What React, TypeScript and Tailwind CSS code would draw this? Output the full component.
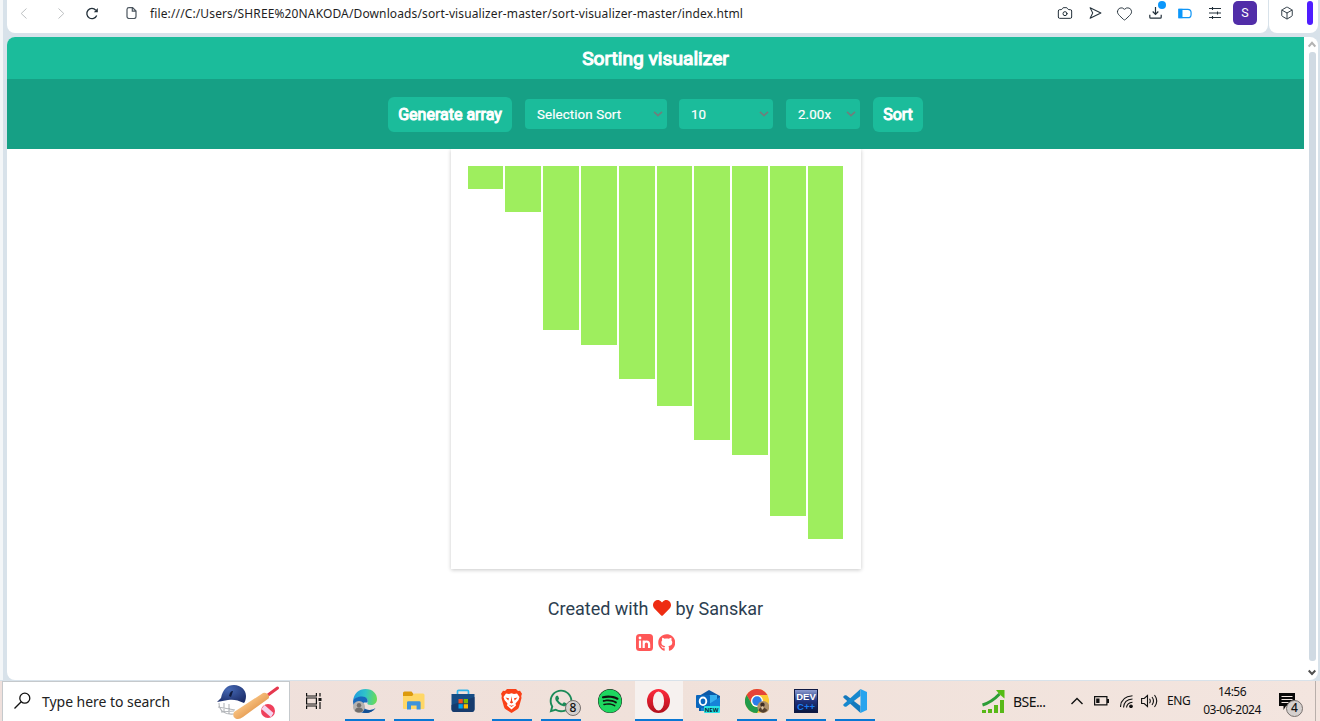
import type { ReactNode } from "react";
import { FaGithub, FaHeart, FaSpotify, FaWhatsapp } from "react-icons/fa";
import { Box, Camera, Heart } from "lucide-react";

const bars = [23, 46, 164, 179, 213, 240, 274, 289, 350, 373];

function Select({ label, className }: { label: string; className: string }) {
  return (
    <div className={`flex h-[30px] items-center justify-between rounded-[4px] bg-[#1bbc9b] pr-[4px] pl-[12px] text-[13.33px] text-white ${className}`}>
      <span className="pt-[2px] tracking-[0.1px] whitespace-nowrap [-webkit-text-stroke:0.2px_white]">{label}</span>
      <svg width="10" height="6" viewBox="0 0 10 6" fill="none" stroke="#6f7f7c" strokeWidth="1.7">
        <path d="M1 .8 5 4.6 9 .8" />
      </svg>
    </div>
  );
}

function ActionButton({ label, className }: { label: string; className: string }) {
  return (
    <button className={`h-[35px] rounded-[6px] bg-[#1bbc9b] pt-[2px] text-[16px] whitespace-nowrap text-white [-webkit-text-stroke:1px_white] ${className}`}>
      {label}
    </button>
  );
}

function BrowserBar() {
  return (
    <div className="flex h-[33px] shrink-0 gap-[1px] pl-[7px] text-[#23303a]">
      <div className="flex h-[33px] w-[1261px] items-start rounded-b-[8px] bg-white">
        <svg className="mt-[8px] ml-[13px]" width="8" height="11" viewBox="0 0 8 11" fill="none" stroke="#bcbfc1" strokeWidth="1">
          <path d="M6.5.5 1.2 5.5l5.3 5" />
        </svg>
        <svg className="mt-[8px] ml-[29px]" width="8" height="11" viewBox="0 0 8 11" fill="none" stroke="#bcbfc1" strokeWidth="1">
          <path d="M1.5.5 6.8 5.5l-5.3 5" />
        </svg>
        <svg className="mt-[7px] ml-[20px]" width="14" height="13" viewBox="0 0 14 13" fill="none" stroke="currentColor" strokeWidth="1.3">
          <path d="M11.7 8.4A5.1 5.1 0 1 1 10.8 3.2" />
          <path d="M12.8 1v4.2H8.8Z" fill="currentColor" stroke="none" />
        </svg>
        <svg className="mt-[7px] ml-[27px]" width="11" height="12" viewBox="0 0 11 12" fill="none" stroke="#4b555e" strokeWidth="1.2">
          <path d="M3 .6h3.6L10 4v5.5a2 2 0 0 1-2 2H3a2 2 0 0 1-2-2v-7A2 2 0 0 1 3 .6ZM6.3.8v3.4h3.5" />
        </svg>
        <span className="mt-[5px] ml-[13px] w-[907px] font-['Noto_Sans',sans-serif] text-[12px] leading-[18px] tracking-[0.128px] whitespace-nowrap text-[#1f1f1f]">
          file:///C:/Users/SHREE%20NAKODA/Downloads/sort-visualizer-master/sort-visualizer-master/index.html
        </span>
        <div className="mt-[1px] flex h-[24px] items-center">
          <Camera size={16} strokeWidth={1.5} />
          <svg className="ml-[16px]" width="13" height="14" viewBox="0 0 14 14" fill="none" stroke="currentColor" strokeWidth="1.1" strokeLinejoin="round">
            <path d="M1.2 1.3 12.8 7 1.2 12.7 4 7Z" />
          </svg>
          <Heart className="ml-[14px]" size={17} strokeWidth={1.3} />
          <div className="relative ml-[16px] h-[14px] w-[13px]">
            <svg width="13" height="13" viewBox="0 0 13 13" fill="none" stroke="currentColor" strokeWidth="1.2">
              <path d="M6.5 1v7.2M3.7 5.5l2.8 2.8 2.8-2.8M.8 8.8v2.4q0 1 1 1h9.4q1 0 1-1V8.8" />
            </svg>
            <i className="absolute -top-[5px] left-[9px] h-[8px] w-[8px] rounded-full bg-[#0b97fb]" />
          </div>
          <svg className="ml-[16px]" width="14" height="11" viewBox="0 0 15 11" fill="none">
            <path d="M1 1h9.5a3.5 3.5 0 0 1 3.5 3.5v2a3.5 3.5 0 0 1-3.5 3.5H1Z" stroke="#1095f5" strokeWidth="1.3" />
            <path d="M.5.5h4.3v10H.5Z" fill="#0b97fb" />
          </svg>
          <svg className="ml-[17px]" width="12" height="12" viewBox="0 0 12 12" fill="none" stroke="currentColor" strokeWidth="1.1">
            <path d="M0 1.5h12M0 6h12M0 10.5h12M3.500 0v3M8.500 4.500v3M3.500 9v3" />
          </svg>
          <div className="ml-[12px] flex h-[24px] w-[24px] items-center justify-center rounded-[5px] bg-[#512da8] text-[12.5px] text-white">S</div>
        </div>
      </div>
      <div className="flex h-[33px] w-[49px] rounded-b-[8px] bg-white">
        <Box className="mt-[6px] ml-[11px]" size={14} strokeWidth={1.6} />
        <i className="mt-[1px] ml-[13px] h-[24px] w-[6px] rounded-[3px] bg-[#4f1dff]" />
      </div>
    </div>
  );
}

function Page() {
  return (
    <main className="flex h-[643px] w-[1311px] overflow-hidden rounded-[8px] bg-white">
      <div className="flex w-[1297px] flex-col">
        <h1 className="flex h-[42px] items-center justify-center bg-[#1bbc9b] pt-[2px] text-[19.2px] text-white [-webkit-text-stroke:1.1px_white]">Sorting visualizer</h1>
        <nav className="z-10 flex h-[70px] items-center justify-center bg-[#16a085]">
          <ActionButton label="Generate array" className="w-[124px]" />
          <Select label="Selection Sort" className="ml-[13px] w-[142px]" />
          <Select label="10" className="ml-[12px] w-[94px]" />
          <Select label="2.00x" className="ml-[13px] w-[74px]" />
          <ActionButton label="Sort" className="ml-[13px] w-[50px]" />
        </nav>
        <section className="ml-[444px] flex h-[420px] w-[410px] items-start gap-[2.04px] pt-[17px] pl-[16.65px] shadow-[0_1px_4px_rgba(0,0,0,0.22)]">
          {bars.map((h) => (
            <div key={h} className="w-[35.75px] shrink-0 bg-[#9eee5e]" style={{ height: h }} />
          ))}
        </section>
        <footer className="flex flex-col items-center pt-[27px] text-[#2c3e50]">
          <p className="flex h-[24px] items-center text-[18px] whitespace-pre">
            Created with <FaHeart className="text-[#ee2c12]" size={18} /> by Sanskar
          </p>
          <div className="mt-[14px] flex items-center gap-[5px] text-[#ff5757]">
            <svg width="17" height="17" viewBox="0 0 17 17">
              <path fillRule="evenodd" d="M3.500 0h10Q17 0 17 3.500v10q0 3.500-3.500 3.500h-10Q0 17 0 13.500v-10Q0 0 3.500 0Z" fill="currentColor" />
              <circle cx="4" cy="4" r="1.400" fill="white" />
              <path d="M4 6.500v7.500M7.700 6.500v7.500M7.700 10.300q0-2.800 2.700-2.800t2.700 2.800v3.700" fill="none" stroke="white" strokeWidth="2.200" />
            </svg>
            <FaGithub size={17.5} />
          </div>
        </footer>
      </div>
      <div className="flex flex-col items-center pt-[4px] pl-[4px]">
        <svg width="8" height="7" viewBox="0 0 8 7" fill="none" stroke="#b3b3b3" strokeWidth="2">
          <path d="M.7 5.5 4 1.8 7.3 5.5" />
        </svg>
        <i className="mt-[4px] h-[609px] w-[7px] rounded-[3px] bg-[#d0dae3]" />
        <svg className="mt-[8px]" width="8" height="7" viewBox="0 0 8 7" fill="none" stroke="#505050" strokeWidth="2">
          <path d="M.7 1.5 4 5 7.3 1.5" />
        </svg>
      </div>
    </main>
  );
}

function TaskItem({ children, open = false, active = false }: { children: ReactNode; open?: boolean; active?: boolean }) {
  return (
    <div className={`flex h-[40px] w-[48px] flex-col items-center ${active ? "bg-[#f6f1ef]" : ""}`}>
      <div className="flex h-[38px] items-center pt-[2px]">{children}</div>
      {open && <i className={`h-[2px] bg-[#0a78d4] ${active ? "w-[48px]" : "w-[40px]"}`} />}
    </div>
  );
}

function CricketArt() {
  return (
    <svg className="mt-[2px]" width="64" height="36" viewBox="0 0 64 36">
      <defs>
        <linearGradient id="bat" x1="0" y1="0" x2="1" y2="1">
          <stop offset="0.3" stopColor="#fbc98a" />
          <stop offset="0.8" stopColor="#dd8a3c" />
        </linearGradient>
        <radialGradient id="helmet" cx="0.4" cy="0.25" r="0.8">
          <stop offset="0" stopColor="#4568b4" />
          <stop offset="1" stopColor="#1b2c68" />
        </radialGradient>
      </defs>
      <path d="M2 19c0 8 6 12 15 11M1 23l17 3M4 28l13-1M7 19v9M12 20v10" fill="none" stroke="#b4b7bb" strokeWidth="1.1" />
      <path d="M4 14C6 5 10 1 17 1c7 0 12 5 12 11 0 3-1 6-2 7-6-3-11-4-16-3L0 18Z" fill="url(#helmet)" />
      <path d="M12 12c1-4 2-5 4-5l-2 6Z" fill="#101b3d" />
      <path d="m51 11 9.500-7" stroke="#e5384e" strokeWidth="3" strokeLinecap="round" />
      <path d="M17 28 46 9q2-1 4.500 1t1 4.500L26 33q-4 3-7.500 1.500T17 28Z" fill="url(#bat)" />
      <circle cx="51" cy="27" r="7" fill="#ef3f5c" />
      <path d="m44.500 25 3-4 9 8-2.500 4.300Z" fill="#f4d5ee" />
    </svg>
  );
}

function Edge() {
  return (
    <div className="relative h-[24px] w-[24px]">
      <svg width="24" height="24" viewBox="0 0 24 24">
        <defs>
          <linearGradient id="edgeTop" x1="0" y1="0.4" x2="1" y2="0.5">
            <stop offset="0" stopColor="#1f9be0" />
            <stop offset="0.5" stopColor="#30c3c8" />
            <stop offset="1" stopColor="#6bdc55" />
          </linearGradient>
        </defs>
        <path d="M0 12C1 4 6 0 12.500 0 20 0 24 5 24 10c0 4-3 6-6 6-3 0-4-1-3.500-2 1.500-3-1-6-5-6C5 8 1 10 0 12Z" fill="url(#edgeTop)" />
        <path d="M0 12c1-3 5-4.500 9-4.500 4.500 0 6.500 3 5.500 6H11c-3 3 1 8 6 7.500 3 0 4-1 5.500-2C20 22.500 16 24 12 24 5 24 0 19 0 12Z" fill="#1769bd" />
        <path d="M10 12c-3 4 0 10 7 9 3 0 4-1 5.500-2C20 22.500 17 24 13 24 6 24 5 16 10 12Z" fill="#124f94" />
      </svg>
      <svg className="absolute top-[12px] left-0" width="12" height="12" viewBox="0 0 12 12">
        <circle cx="6" cy="6" r="6" fill="#b5b1af" />
        <circle cx="6" cy="4.2" r="2.2" fill="#706d6c" />
        <path d="M2 10q0-3.500 4-3.500t4 3.500q-4 3-8 0Z" fill="#706d6c" />
      </svg>
    </div>
  );
}

function Folder() {
  return (
    <svg width="22" height="20" viewBox="0 0 22 20">
      <path d="M0 2q0-1.500 1.500-1.500h7L10.500 3v4H0Z" fill="#dc9a0d" />
      <path d="M0 5h9l2.500-2.500H20q1.500 0 1.500 1.500v13q0 1-1 1H1q-1 0-1-1Z" fill="#ffd766" />
      <path d="M4 18.500v-7q0-1.300 1.300-1.300h11q1.300 0 1.300 1.300v7h-4v-4H8v4Z" fill="#3c93dc" />
    </svg>
  );
}

function Store() {
  return (
    <svg className="mr-[1px]" width="24" height="24" viewBox="0 0 24 24">
      <path d="M6.500 6V2.500Q6.500 1.300 7.700 1.300h8.600q1.200 0 1.200 1.200V6" fill="none" stroke="#32b5ec" strokeWidth="1.7" />
      <path d="M.5 5h23v15q0 3-3 3h-17q-3 0-3-3Z" fill="#164d85" />
      <path d="M.5 16 23.500 8v12q0 3-3 3h-17q-3 0-3-3Z" fill="#173b6d" />
      <path d="M7.500 10h4.300v4.300H7.500Z" fill="#f25022" />
      <path d="M12.700 10H17v4.300h-4.300Z" fill="#7fba00" />
      <path d="M7.500 15.200h4.300v4.300H7.500Z" fill="#00a4ef" />
      <path d="M12.700 15.200H17v4.300h-4.300Z" fill="#ffb900" />
    </svg>
  );
}

function Brave() {
  return (
    <svg className="mr-[1px]" width="21" height="24" viewBox="0 0 21 24">
      <path d="M6 0h9l2 2 2-.3 2 3-.8 2.300.3 2-2.500 9q-.5 1.500-2 2.500L10.500 24 5 20.500Q3.500 19.500 3 18L.5 9l.3-2L0 4.700l2-3L4 2Z" fill="#fa4118" />
      <path d="m5 4.500 3 .5 2.500-.7 2.500.7 3-.5L18.500 8l-1 3-3 3.500.5 2-4.500 4-4.500-4 .5-2-3-3.500-1-3Z" fill="white" />
      <path d="m4.500 8.500 3.500.7-.7 2.300Zm12 0-3.500.7.700 2.300ZM10.500 7l-.7 5-1 1.500 1.700 1 1.700-1-1-1.500ZM7.500 15.800l3 1 3-1-3 2.200Z" fill="#fa4118" />
    </svg>
  );
}

function Opera() {
  return (
    <svg className="mr-[1px]" width="23" height="24" viewBox="0 0 23 24">
      <defs>
        <linearGradient id="opera" x1="0" y1="0" x2="0" y2="1">
          <stop offset="0" stopColor="#ff2a3c" />
          <stop offset="1" stopColor="#b1101c" />
        </linearGradient>
      </defs>
      <path fillRule="evenodd" d="M11.500 0a11.500 12 0 1 1 0 24 11.500 12 0 1 1 0-24Zm0 2.600a5.600 9.400 0 1 0 0 18.800 5.600 9.400 0 1 0 0-18.800Z" fill="url(#opera)" />
    </svg>
  );
}

function Outlook() {
  return (
    <div className="relative mr-[1px] h-[24px] w-[24px]">
      <svg width="24" height="24" viewBox="0 0 24 24">
        <path d="m3 7 10-6 11 6v15H3Z" fill="#0c59a6" />
        <path d="M8 6h13v9H8Z" fill="#36b0ee" />
        <path d="m5 10 8 5 11-7v14H5Z" fill="#1683d8" />
        <rect y="6" width="14" height="13" rx="1" fill="#0a67bd" />
        <ellipse cx="7" cy="12.3" rx="3.3" ry="3.8" fill="none" stroke="white" strokeWidth="1.9" />
      </svg>
      <span className="absolute top-[17px] left-[8px] flex h-[7px] w-[16px] items-center justify-center rounded-[1px] bg-[#28e2e6] font-['Noto_Sans'] text-[6px] leading-none font-bold text-[#082a35]">NEW</span>
    </div>
  );
}

function Chrome() {
  return (
    <svg width="24" height="24" viewBox="0 0 24 24">
      <circle cx="12" cy="12" r="12" fill="#fcc934" />
      <path d="M1.600 6A12 12 0 0 1 22.400 6H12a6 6 0 0 0-5.200 9Z" fill="#e5433a" />
      <path d="M1.600 6A12 12 0 0 0 12 24l5.200-9a6 6 0 0 1-10.400 0Z" fill="#229b4b" />
      <circle cx="12" cy="12" r="6" fill="white" />
      <circle cx="12" cy="12" r="4.7" fill="#2b7de9" />
      <circle cx="18.300" cy="18" r="6" fill="#ae9069" />
      <circle cx="17.500" cy="15.800" r="2.2" fill="#3c2c24" />
      <path d="M13.500 21.500q1-4 5-3.500l4 3q-4 5-9 .5Z" fill="#55412f" />
      <path d="m16 18 2-1 1 2-2 2Z" fill="#dfc6a2" />
    </svg>
  );
}

function DevCpp() {
  return (
    <div className="flex h-[24px] w-[24px] flex-col items-center justify-between overflow-hidden border border-[#101a44] bg-linear-to-b from-[#8d9bd0] via-[#20327c] to-[#0b1740] font-['Liberation_Sans'] font-bold">
      <span className="mt-[2px] h-[9px] text-[9.5px] leading-[9px] text-white">DEV</span>
      <span className="mb-px h-[9px] text-[9.5px] leading-[9px] text-[#1b7cf0]">C++</span>
    </div>
  );
}

function VsCode() {
  return (
    <svg width="24" height="24" viewBox="0 0 24 24">
      <path d="M1.800 6.200.3 7.600v1L17.500 24V17L3.200 6.200Z" fill="#1479bd" />
      <path d="m.3 16.400 1.500 1.400h1.400L17.500 7V0L.3 15.400Z" fill="#1688ce" />
      <path d="M17.500 0 24 3v18l-6.500 3Z" fill="#28a4ee" />
    </svg>
  );
}

function Tray() {
  return (
    <div className="ml-auto flex h-[40px] w-[338px] items-center font-['Noto_Sans',sans-serif] text-[#111]">
      <svg width="23" height="23" viewBox="0 0 23 23">
        <path d="M0 20h4v3H0Zm6-1h4v4H6Zm6-4h4v8h-4Zm6-5h4v13h-4Z" fill="#58b818" />
        <path d="M.5 15Q10 12 17.500 4" stroke="#2c9d37" strokeWidth="3" fill="none" />
        <path d="M14 0h8.500v8.500L19.500 6 16 2.500Z" fill="#55bc12" />
      </svg>
      <span className="ml-[8px] w-[58px] text-[14px] tracking-[-0.55px]">BSE...</span>
      <svg width="12" height="8" viewBox="0 0 12 8" fill="none" stroke="currentColor" strokeWidth="1.4">
        <path d="M.5 7 6 1.500 11.500 7" />
      </svg>
      <svg className="ml-[11px]" width="15" height="10" viewBox="0 0 15 10">
        <path d="M.6.6h12.300v8.300H.6Z" fill="none" stroke="currentColor" strokeWidth="1.2" />
        <path d="M2.200 2.500h3.300v4.500H2.200ZM13 3h2v4h-2Z" fill="currentColor" />
      </svg>
      <svg className="ml-[11px]" width="13" height="13" viewBox="0 0 13 13" fill="none" stroke="currentColor" strokeWidth="1.1">
        <path d="M.5 12Q1 1.500 12.500.8M3.500 12.500Q4 4.700 12.500 4M6.500 12.500Q7 7.800 12.500 7.200" />
        <circle cx="11" cy="11.300" r="1.3" fill="currentColor" />
      </svg>
      <svg className="ml-[8px]" width="17" height="14" viewBox="0 0 17 14" fill="none" stroke="currentColor" strokeWidth="1.1">
        <path d="M.6 4.500h2.600L6.500 1.500v11L3.200 9.500H.6ZM8.500 4.800q1.600 2.200 0 4.400M11 3q3 4 0 8M13.500 1q4.500 6 0 12" />
      </svg>
      <span className="ml-[9px] w-[24px] text-[12px] tracking-[-0.4px]">ENG</span>
      <div className="ml-[12px] flex w-[58px] flex-col items-center text-[12px] leading-[18px] tracking-[-0.5px]">
        <span>14:56</span>
        <span>03-06-2024</span>
      </div>
      <div className="relative ml-[18px] h-[17px] w-[16px]">
        <svg width="16" height="17" viewBox="0 0 16 17">
          <path d="M0 0h16v13H7l-2.500 4v-4H0Z" fill="#090909" />
          <path d="M2.500 3.500h11M2.500 6.500h11M2.500 9.500h7" stroke="#f3e7e2" strokeWidth="1.2" />
        </svg>
        <span className="absolute top-[7px] left-[7px] flex h-[17px] w-[17px] items-center justify-center rounded-full border border-[#77706d] bg-[#d5d0ce] text-[12px] leading-none font-medium">4</span>
      </div>
      <i className="mr-[4px] ml-auto h-[40px] w-px bg-[#b9afab]" />
    </div>
  );
}

function Taskbar() {
  return (
    <div className="flex h-[40px] shrink-0 bg-linear-to-r from-[#efe0dc] via-[#f0e1da] to-[#f3e5df]">
      <div className="ml-[2px] flex h-[40px] w-[288px] border border-b-0 border-[#c5c9cc] bg-white">
        <svg className="mt-[10px] ml-[11px]" width="17" height="18" viewBox="0 0 17 18" fill="none" stroke="#111" strokeWidth="1.3">
          <circle cx="10.800" cy="6.200" r="5" />
          <path d="M7.200 9.800.5 16.500" />
        </svg>
        <span className="mt-[9px] ml-[11px] w-[175px] font-['Noto_Sans',sans-serif] text-[14px] leading-[21px] tracking-[-0.04px] text-[#222]">Type here to search</span>
        <CricketArt />
      </div>
      <svg className="mt-[12px] ml-[16px]" width="16" height="16" viewBox="0 0 16 16" fill="none" stroke="#111" strokeWidth="1.2">
        <path d="M.6 0v3h9.800V0M.6 5h9.800v6H.6ZM.6 16v-3h9.800v3M14 0v3.500M14 9v7" />
        <path d="M12.500 5h3v3h-3Z" fill="#111" stroke="none" />
      </svg>
      <div className="ml-[19px] flex gap-[1px]">
        <TaskItem open><Edge /></TaskItem>
        <TaskItem open><Folder /></TaskItem>
        <TaskItem><Store /></TaskItem>
        <TaskItem open><Brave /></TaskItem>
        <TaskItem open>
          <div className="relative text-[#1b8a58]">
            <FaWhatsapp size={26} />
            <span className="absolute top-[12px] left-[17px] flex h-[16px] w-[16px] items-center justify-center rounded-full border border-[#77706d] bg-[#d5d0ce] font-['Noto_Sans'] text-[12px] leading-none font-medium text-[#111]">8</span>
          </div>
        </TaskItem>
        <TaskItem><FaSpotify className="rounded-full bg-[#101510] text-[#1ed760]" size={24} /></TaskItem>
        <TaskItem open active><Opera /></TaskItem>
        <TaskItem><Outlook /></TaskItem>
        <TaskItem open><Chrome /></TaskItem>
        <TaskItem open><DevCpp /></TaskItem>
        <TaskItem open><VsCode /></TaskItem>
      </div>
      <Tray />
    </div>
  );
}

export default function App() {
  return (
    <div className="flex h-[721px] w-[1320px] flex-col overflow-hidden bg-[#d8e2ea] font-[Roboto,sans-serif]">
      <BrowserBar />
      <div className="flex h-[648px] shrink-0 pt-[4px]">
        <i className="-mt-[37px] h-[680px] w-[3px] bg-[#f3f6f8]" />
        <i className="w-[4px]" />
        <Page />
      </div>
      <Taskbar />
    </div>
  );
}
